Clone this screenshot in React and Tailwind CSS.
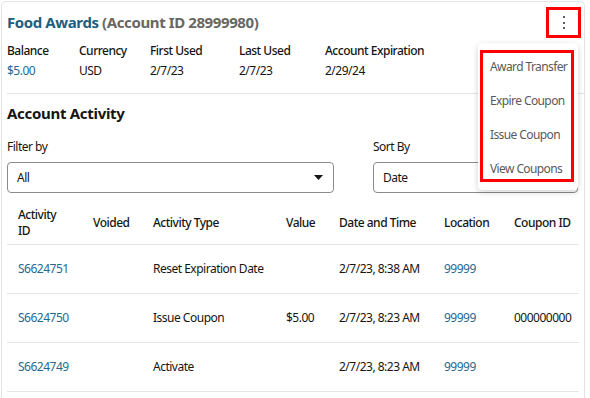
import React from "react";

const summary = [
  { label: "Balance", value: "$5.00", link: true, w: "w-[72px]" },
  { label: "Currency", value: "USD", w: "w-[71px]" },
  { label: "First Used", value: "2/7/23", w: "w-[89px]" },
  { label: "Last Used", value: "2/7/23", w: "w-[86px]" },
  { label: "Account Expiration", value: "2/29/24", w: "w-[130px]" },
];

const rows = [
  { id: "S6624751", type: "Reset Expiration Date", value: "", date: "2/7/23, 8:38 AM", loc: "99999", coupon: "" },
  { id: "S6624750", type: "Issue Coupon", value: "$5.00", date: "2/7/23, 8:23 AM", loc: "99999", coupon: "000000000" },
  { id: "S6624749", type: "Activate", value: "", date: "2/7/23, 8:23 AM", loc: "99999", coupon: "" },
];

const menuItems = ["Award Transfer", "Expire Coupon", "Issue Coupon", "View Coupons"];

const Caret = () => (
  <svg width="9" height="5" viewBox="0 0 9 5">
    <path d="M0 0h9L4.5 5z" fill="#161513" />
  </svg>
);

const Select = ({ value, className }) => (
  <div
    className={`h-[31px] border border-[#8d8b88] rounded-[4px] flex items-center justify-between pl-[9px] pr-[10px] ${className}`}
  >
    <span>{value}</span>
    <Caret />
  </div>
);

export default function App() {
  const th = "pl-[11px] text-left font-medium align-middle h-[41px]";
  const td = "pl-[11px] align-middle h-[49px] whitespace-nowrap";

  return (
    <div className="p-px bg-white text-[12px] leading-[16px] tracking-[-0.5px] text-[#161513] font-['Noto_Sans',sans-serif]">
      <div className="relative w-[584px] h-[420px] border border-[#e4e4e4] rounded-[5px] px-[5px]">
        {/* header */}
        <h1 className="pt-[11px] text-[15px] leading-[18px] font-bold tracking-[-0.4px]">
          <span className="text-[#1d5e80]">Food Awards</span>{" "}
          <span className="text-[#696764]">(Account ID 28999980)</span>
        </h1>

        <div className="flex mt-[12px]">
          {summary.map((s) => (
            <div key={s.label} className={s.w}>
              <div className="font-medium">{s.label}</div>
              <div className={`mt-[4px] ${s.link ? "text-[#25698f]" : ""}`}>{s.value}</div>
            </div>
          ))}
        </div>

        <div className="mt-[14px] h-px bg-[#e4e4e4] mr-[-5px]" />

        <h2 className="mt-[9px] text-[15px] leading-[20px] font-bold tracking-[-0.3px]">Account Activity</h2>

        <div className="flex mt-[16px] gap-[39px]">
          <div className="w-[327px]">
            <div>Filter by</div>
            <Select value="All" className="mt-[7px]" />
          </div>
          <div className="w-[205px]">
            <div>Sort By</div>
            <Select value="Date" className="mt-[7px]" />
          </div>
        </div>

        <table className="mt-[10px] w-[572px] table-fixed border-collapse">
          <colgroup>
            <col className="w-[75px]" />
            <col className="w-[60px]" />
            <col className="w-[133px]" />
            <col className="w-[53px]" />
            <col className="w-[105px]" />
            <col className="w-[70px]" />
            <col className="w-[76px]" />
          </colgroup>
          <thead>
            <tr className="border-b border-[#e4e4e4]">
              <th className={th}>
                Activity
                <br />
                ID
              </th>
              <th className={th}>Voided</th>
              <th className={th}>Activity Type</th>
              <th className={th}>Value</th>
              <th className={th}>Date and Time</th>
              <th className={th}>Location</th>
              <th className={th}>Coupon ID</th>
            </tr>
          </thead>
          <tbody>
            {rows.map((r) => (
              <tr key={r.id} className="border-b border-[#e4e4e4]">
                <td className={`${td} text-[#25698f]`}>{r.id}</td>
                <td className={td}></td>
                <td className={td}>{r.type}</td>
                <td className={td}>{r.value}</td>
                <td className={td}>{r.date}</td>
                <td className={`${td} text-[#25698f]`}>{r.loc}</td>
                <td className={td}>{r.coupon}</td>
              </tr>
            ))}
          </tbody>
        </table>

        {/* kebab button, annotated */}
        <button className="absolute right-[3px] top-[5px] w-[35px] h-[31px] border-[3px] border-[#ff0000] flex flex-col items-center justify-center gap-[3.5px]">
          <span className="w-[2px] h-[2px] rounded-full bg-[#2a2a2a]" />
          <span className="w-[2px] h-[2px] rounded-full bg-[#2a2a2a]" />
          <span className="w-[2px] h-[2px] rounded-full bg-[#2a2a2a]" />
        </button>

        {/* open menu */}
        <div className="absolute left-[476px] top-[41px] w-[100px] h-[147px] bg-white rounded-[4px] shadow-[0_2px_6px_rgba(0,0,0,0.18)] pt-[7px]">
          {menuItems.map((m) => (
            <div key={m} className="h-[34px] flex items-center pl-[12px] text-[#5b5956] whitespace-nowrap tracking-[-0.6px]">
              {m}
            </div>
          ))}
          <div className="absolute left-[2px] right-[4px] top-[7px] bottom-[8px] border-[3px] border-[#ff0000]" />
        </div>
      </div>
    </div>
  );
}
